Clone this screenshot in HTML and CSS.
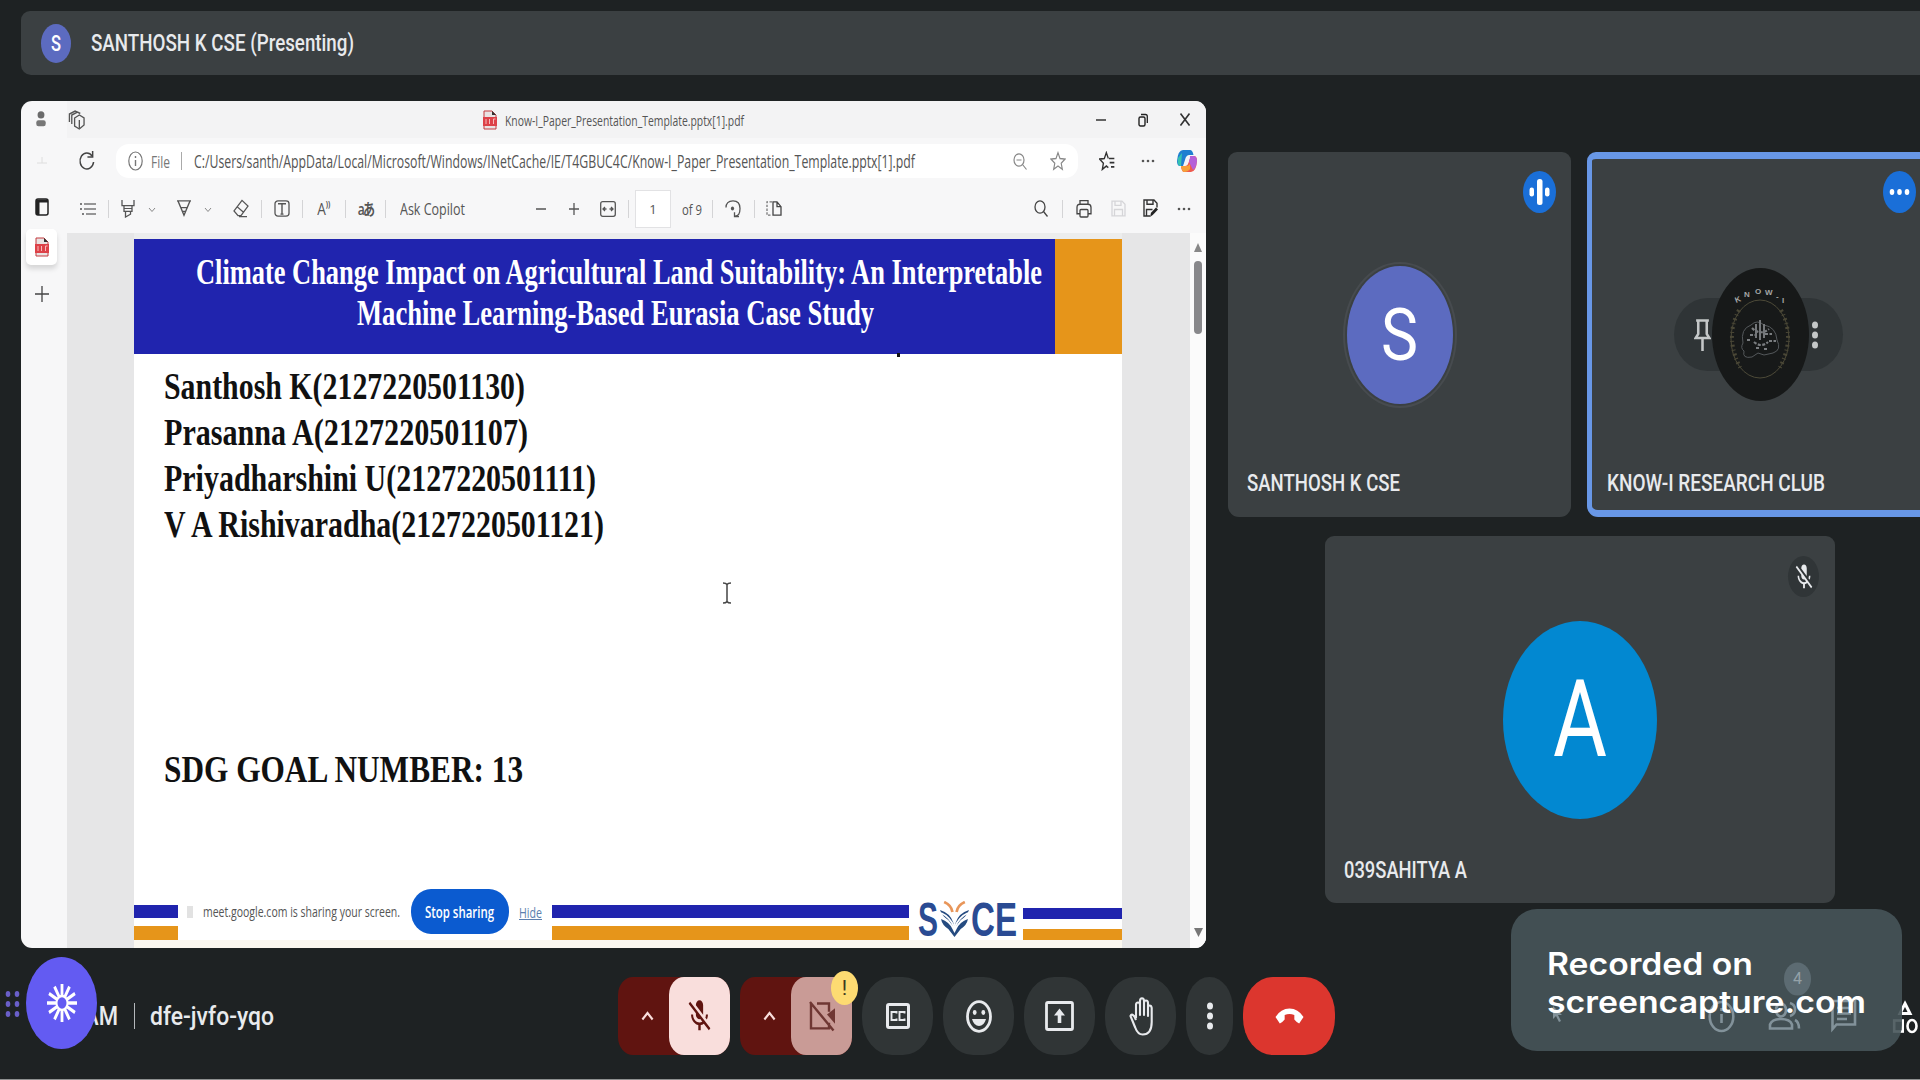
FILE: index.html
```html
<!DOCTYPE html>
<html lang="en">
<head>
<meta charset="utf-8">
<title>Meeting</title>
<link rel="stylesheet" href="styles.css">
</head>
<body>
<header class="presenter">
  <div class="avatar avatar-sm"><span class="fit ini-sm">S</span></div>
  <span class="fit presenter-name">SANTHOSH K CSE (Presenting)</span>
</header>

<main class="stage">
  <section class="window">
    <aside class="tabs">
      <svg class="i-person" viewBox="0 0 14 20" preserveAspectRatio="none"><circle cx="7" cy="5.500" r="4" fill="#6b6b6b"/><rect x="1.500" y="11.500" width="11" height="6.500" rx="2.500" fill="#777"/></svg>
      <svg class="i-back" viewBox="0 0 12 12"><path d="M1 9h10M6 3v6" stroke="#dedede" fill="none"/></svg>
      <svg class="i-tab" viewBox="0 0 14 18" preserveAspectRatio="none"><rect x="1" y="1" width="12" height="16" rx="2" fill="none" stroke="#222" stroke-width="1.500"/><path d="M1 2h3.500v15H1zM1 1.500h12v3H1z" fill="#222"/></svg>
      <div class="tab-current"><svg class="i-pdf" viewBox="0 0 14 20" preserveAspectRatio="none"><path d="M1 1h8l4 4v14H1z" fill="#e9e3e3" stroke="#c33a3f"/><path d="M9 1l4 4H9z" fill="#333"/><rect y="7" width="14" height="9" fill="#dd4148"/><path d="M3 9v5M6.500 9v5M10.500 9v5M10.500 9h2" stroke="#f7b9b9"/></svg></div>
      <svg class="i-plus" viewBox="0 0 14 16" preserveAspectRatio="none"><path d="M7 0v16M0 8h14" stroke="#444" stroke-width="1.300"/></svg>
    </aside>
    <div class="browser">
      <div class="titlebar">
        <svg class="i-copies" viewBox="0 0 18 20" preserveAspectRatio="none"><g fill="none" stroke="#555" stroke-width="1.400"><path d="M7 8l5-3 5 3v7l-5 4-5-3z"/><path d="M4 14V5l6-3 3 1.500M1.500 12V4l6-3 2 .8M12 10v8"/></g></svg>
        <svg class="i-pdf" viewBox="0 0 14 20" preserveAspectRatio="none"><path d="M1 1h8l4 4v14H1z" fill="#e9e3e3" stroke="#c33a3f"/><path d="M9 1l4 4H9z" fill="#333"/><rect y="7" width="14" height="9" fill="#dd4148"/><path d="M3 9v5M6.500 9v5M10.500 9v5M10.500 9h2" stroke="#f7b9b9"/></svg>
        <span class="fit doc-title">Know-I_Paper_Presentation_Template.pptx[1].pdf</span>
        <svg class="i-min" viewBox="0 0 10 12"><path d="M0 6h10" stroke="#333" stroke-width="1.600"/></svg>
        <svg class="i-restore" viewBox="0 0 10 14" preserveAspectRatio="none"><rect x="1" y="4" width="6" height="9" rx="1.500" fill="none" stroke="#222" stroke-width="1.400"/><path d="M3 1.500h4.500q1.800 0 1.800 2V10" fill="none" stroke="#222" stroke-width="1.300"/></svg>
        <svg class="i-close" viewBox="0 0 10 13" preserveAspectRatio="none"><path d="M.5.5l9 12M9.500.5l-9 12" stroke="#333" stroke-width="1.600"/></svg>
      </div>
      <div class="addressbar">
        <svg class="i-refresh" viewBox="0 0 18 20" preserveAspectRatio="none"><path d="M15 5A7.200 8 0 1 0 16.500 11" fill="none" stroke="#444" stroke-width="1.600"/><path d="M15.500 0v6H10" fill="none" stroke="#444" stroke-width="1.600"/></svg>
        <div class="url">
          <svg class="i-info-s" viewBox="0 0 15 20" preserveAspectRatio="none"><ellipse cx="7.500" cy="10" rx="6.700" ry="9" fill="none" stroke="#777" stroke-width="1.200"/><path d="M7.500 9v6M7.500 5v2" stroke="#777" stroke-width="1.400"/></svg>
          <span class="fit url-file">File</span>
          <i class="vline"></i>
          <span class="fit url-path">C:/Users/santh/AppData/Local/Microsoft/Windows/INetCache/IE/T4GBUC4C/Know-I_Paper_Presentation_Template.pptx[1].pdf</span>
          <svg class="i-zoomout" viewBox="0 0 14 17" preserveAspectRatio="none"><g fill="none" stroke="#888" stroke-width="1.200"><ellipse cx="6" cy="7" rx="5" ry="6.200"/><path d="M3.500 7h5M9.500 11.500l4 5"/></g></svg>
          <svg class="i-star" viewBox="0 0 24 24" preserveAspectRatio="none"><path d="M12 2l3 7 7.500.7-5.700 5 1.700 7.300L12 18l-6.500 4 1.700-7.300-5.700-5L9 9z" fill="none" stroke="#888" stroke-width="1.700"/></svg>
        </div>
        <svg class="i-star" viewBox="0 0 24 24" preserveAspectRatio="none"><path d="M14 20l-3-2-6 4 1.600-7.300L1 9.700 8 9l3-7 3 7M15 9h8M16 14h7M18 19h5" fill="none" stroke="#333" stroke-width="2"/></svg>
        <svg class="i-dots" viewBox="0 0 14 4"><g fill="#555"><circle cx="2" cy="2" r="1.300"/><circle cx="7" cy="2" r="1.300"/><circle cx="12" cy="2" r="1.300"/></g></svg>
        <svg class="i-copilot" viewBox="0 0 20 24" preserveAspectRatio="none"><path d="M6 1h7q2.500 0 3.500 5h-4Q9 6 8 11l-2 6H3Q0 17 0 12 1 1 6 1z" fill="#1f7fd0"/><path d="M1 9l4-5-1 13H3Q0 16 1 9z" fill="#36c3b0"/><path d="M14 23H7q-2 0-3-5l4-1q3 0 4-5l2-5h3q3 0 3 5-1 11-6 11z" fill="#ee5a4f"/><path d="M16 7q4 0 4 5-1 8-4 9l-4-8 1-6z" fill="#b45fd8"/><path d="M4 17h5q3 0 4-2v5q-2 3-6 3-2 0-3-6z" fill="#f6a03b"/><path d="M10 8h3l-3 8H7z" fill="#f4f4f6"/></svg>
      </div>
      <div class="toolbar">
        <svg class="i-list" viewBox="0 0 16 16" preserveAspectRatio="none"><path d="M4 3h12M4 8h12M6 13h10" stroke="#777" stroke-width="1.300"/><path d="M0 3h2M0 8h2M2 13h2" stroke="#555" stroke-width="1.600"/></svg>
        <i class="vline"></i>
        <div class="tool-pair">
          <svg class="i-tool" viewBox="0 0 16 20" preserveAspectRatio="none"><path d="M2 1v6h12V1M4 7v6h8V7M5.500 13v6l5-3v-3M4 10h8" fill="none" stroke="#555" stroke-width="1.300"/></svg>
          <svg class="i-chev" viewBox="0 0 8 6"><path d="M1 1l3 3.500L7 1" fill="none" stroke="#888"/></svg>
        </div>
        <div class="tool-pair">
          <svg class="i-tool" viewBox="0 0 16 20" preserveAspectRatio="none"><path d="M1 2h14M2 2l6 15 6-15M5 9h6M7 13h2" fill="none" stroke="#555" stroke-width="1.400"/></svg>
          <svg class="i-chev" viewBox="0 0 8 6"><path d="M1 1l3 3.500L7 1" fill="none" stroke="#888"/></svg>
        </div>
        <svg class="i-tool" viewBox="0 0 16 20" preserveAspectRatio="none"><path d="M9 1.500l6 6-7 10H5l-4-5zM4 8l6.500 6M6 18.500h8" fill="none" stroke="#555" stroke-width="1.300"/></svg>
        <i class="vline"></i>
        <svg class="i-tool" viewBox="0 0 16 20" preserveAspectRatio="none"><rect x="1" y="2" width="14" height="16" rx="3" fill="none" stroke="#555" stroke-width="1.300"/><path d="M4 5h8M8 5v11M6.500 16h3" stroke="#555" stroke-width="1.400"/></svg>
        <i class="vline"></i>
        <span class="read-aloud">A<sup>))</sup></span>
        <i class="vline"></i>
        <span class="translate">aあ</span>
        <i class="vline"></i>
        <span class="fit ask">Ask Copilot</span>
        <i></i>
        <svg class="i-sign" viewBox="0 0 10 12" preserveAspectRatio="none"><path d="M0 6h10" stroke="#555" stroke-width="1.300"/></svg>
        <svg class="i-sign" viewBox="0 0 10 12" preserveAspectRatio="none"><path d="M0 6h10M5 0v12" stroke="#555" stroke-width="1.300"/></svg>
        <svg class="i-fit" viewBox="0 0 16 16" preserveAspectRatio="none"><rect x=".7" y=".7" width="14.600" height="14.600" rx="2" fill="none" stroke="#555" stroke-width="1.300"/><path d="M3 8h3.500M13 8H9.500M5 6L3 8l2 2M11 6l2 2-2 2" fill="none" stroke="#555" stroke-width="1.300"/></svg>
        <i class="vline"></i>
        <span class="page-no">1</span>
        <span class="fit page-of">of 9</span>
        <i class="vline"></i>
        <svg class="i-tool" viewBox="0 0 16 20" preserveAspectRatio="none"><path d="M1 9Q1 2 8 2t7 8-5 8M9.500 14v4.500H14" fill="none" stroke="#555" stroke-width="1.300"/><ellipse cx="7.500" cy="10" rx="1.600" ry="2" fill="#555"/></svg>
        <i class="vline"></i>
        <svg class="i-tool" viewBox="0 0 16 20" preserveAspectRatio="none"><path d="M6 3H1v14h5" fill="none" stroke="#777" stroke-width="1.300" stroke-dasharray="2.500 1.500"/><path d="M7 3h4l4 5v9H7zM11 3v5h4" fill="none" stroke="#444" stroke-width="1.300"/></svg>
        <i></i>
        <svg class="i-search" viewBox="0 0 14 17" preserveAspectRatio="none"><g fill="none" stroke="#444" stroke-width="1.300"><ellipse cx="6" cy="7" rx="5" ry="6.200"/><path d="M9.500 11.500l4 5"/></g></svg>
        <i class="vline"></i>
        <svg class="i-tool" viewBox="0 0 16 18" preserveAspectRatio="none"><g fill="none" stroke="#444" stroke-width="1.300"><path d="M4 5V1.500h8V5M4 14H1V8q0-3 3-3h8q3 0 3 3v6h-3"/><rect x="4" y="10" width="8" height="7" rx="1"/></g></svg>
        <svg class="i-tool" viewBox="0 0 16 18" preserveAspectRatio="none"><path d="M2 2h10l3 3v11H2zM5 2v4h6V2M4.500 16v-6h8v6" fill="none" stroke="#d5d5d8" stroke-width="1.300"/></svg>
        <svg class="i-tool" viewBox="0 0 16 18" preserveAspectRatio="none"><path d="M8 16H2V1h10l3 3v4M5 1v4h6V1M4.500 16v-6h6" fill="none" stroke="#333" stroke-width="1.400"/><path d="M8 17l1-4 5-5 2 2-5 5z" fill="#222"/></svg>
        <svg class="i-dots" viewBox="0 0 14 4"><g fill="#555"><circle cx="2" cy="2" r="1.300"/><circle cx="7" cy="2" r="1.300"/><circle cx="12" cy="2" r="1.300"/></g></svg>
      </div>
      <div class="viewer">
        <article class="slide">
          <div class="banner">
            <h1 class="banner-title">
              <span class="fit bt-1">Climate Change Impact on Agricultural Land Suitability: An Interpretable</span>
              <span class="fit bt-2">Machine Learning-Based Eurasia Case Study</span>
            </h1>
            <div class="banner-accent"></div>
            <i class="speck"></i>
          </div>
          <div class="authors">
            <span class="fit au au-1">Santhosh K(2127220501130)</span>
            <span class="fit au au-2">Prasanna A(2127220501107)</span>
            <span class="fit au au-3">Priyadharshini U(2127220501111)</span>
            <span class="fit au au-4">V A Rishivaradha(2127220501121)</span>
          </div>
          <span class="fit au sdg">SDG GOAL NUMBER: 13</span>
          <div class="slide-foot">
            <div class="stripes stripes-l"></div>
            <div class="share">
              <i class="share-grip"></i>
              <span class="fit share-text">meet.google.com is sharing your screen.</span>
              <button class="share-stop"><span class="fit stop-text">Stop sharing</span></button>
              <a class="fit share-hide">Hide</a>
            </div>
            <div class="stripes stripes-m"></div>
            <div class="logo">
              <span class="fit logo-s">S</span>
              <svg class="logo-v" viewBox="0 0 28 36" preserveAspectRatio="none"><g fill="#254b80"><path d="M0 9q10 3 13 13l1 4 1-4q3-10 13-13-2 6-8 10l-6 8-6-8Q2 15 0 9z"/><path d="M1 18q8 3 11 10l2 4 2-4q3-7 11-10-1 6-7 10l-6 8-6-8Q2 24 1 18z"/></g><path d="M1 12q9 4 13 15 4-11 13-15" fill="none" stroke="#fff" stroke-width="1.800"/><path d="M4 1q7 3 8 10M24 1q-7 3-8 10" fill="none" stroke="#e8965a" stroke-width="2.600"/></svg>
              <span class="fit logo-ce">CE</span>
            </div>
            <div class="stripes stripes-r"></div>
          </div>
          <svg class="ibeam" viewBox="0 0 10 22"><path d="M1 1q3 0 4 1.500Q6 1 9 1M5 2.500v17M1 21q3 0 4-1.500Q6 21 9 21" fill="none" stroke="#444" stroke-width="1.500"/></svg>
        </article>
        <div class="scrollbar">
          <svg class="i-arrow" viewBox="0 0 8 9" preserveAspectRatio="none"><path d="M4 0l4 9H0z" fill="#888"/></svg>
          <div class="thumb"></div>
          <svg class="i-arrow down" viewBox="0 0 10 9" preserveAspectRatio="none"><path d="M0 0h10L5 9z" fill="#777"/></svg>
        </div>
      </div>
    </div>
  </section>

  <section class="people">
    <div class="people-row">
      <div class="tile tile-1">
        <div class="badge"><svg viewBox="0 0 32 42"><g fill="#fff"><rect x="6" y="16.500" width="4.500" height="9" rx="2.200"/><rect x="13.500" y="8" width="5.500" height="26" rx="2.500"/><rect x="21.500" y="16.500" width="4.500" height="9" rx="2.200"/></g></svg></div>
        <div class="avatar avatar-md"><span class="fit ini-md">S</span></div>
        <span class="fit name n-1">SANTHOSH K CSE</span>
      </div>
      <div class="tile tile-2">
        <div class="badge"><svg viewBox="0 0 32 42"><g fill="#fff"><ellipse cx="8.500" cy="21" rx="2.300" ry="2.900"/><ellipse cx="16" cy="21" rx="2.300" ry="2.900"/><ellipse cx="23.500" cy="21" rx="2.300" ry="2.900"/></g></svg></div>
        <div class="hover-pill">
          <svg class="i-pin" viewBox="0 0 16 32" preserveAspectRatio="none"><path d="M2 1.500h12M4 2v13l-2.500 4h13L12 15V2M8 19v13" fill="none" stroke="#c4c7c8" stroke-width="2.400"/></svg>
          <svg class="crest" viewBox="0 0 97 133">
            <ellipse cx="48.500" cy="66.500" rx="48.500" ry="66.500" fill="#171919"/>
            <ellipse cx="48" cy="71" rx="29" ry="39" fill="none" stroke="#4d4a38" stroke-width="1"/>
            <path d="M27 42q-15 28 2 59M69 42q15 28-2 59" fill="none" stroke="#4a4736" stroke-width="4" stroke-dasharray="2 3 1 3"/>
            <path d="M31 75q-3-14 8-18 6-6 13 0 12 2 13 15 5 10-4 13l-9 2-6-2-6 4q-10 2-8-6-4-3-1-8z" fill="none" stroke="#54585b"/>
            <path d="M40 60q8 8 17 1M38 67h6M53 66h7M42 74q7 6 14 0M35 72h4M57 73h7M44 80h4M52 81h4" fill="none" stroke="#7b7e81" stroke-width="2.200" stroke-dasharray="3 1.500"/>
            <path d="M48 52v20M44 56v14M52 56v14" fill="none" stroke="#74777a" stroke-width="2"/>
            <g fill="#a5a7a7" font-family="Liberation Sans" font-weight="bold" font-size="8"><text x="24" y="35" transform="rotate(-20 24 35)">K</text><text x="32" y="29">N</text><text x="43" y="26">O</text><text x="53" y="27">W</text><text x="64" y="31">-</text><text x="70" y="35">I</text></g>
          </svg>
          <svg class="i-kebab" viewBox="0 0 8 28"><g fill="#c4c7c8"><ellipse cx="4" cy="4" rx="3" ry="3.500"/><ellipse cx="4" cy="14" rx="3" ry="3.500"/><ellipse cx="4" cy="24" rx="3" ry="3.500"/></g></svg>
        </div>
        <span class="fit name n-2">KNOW-I RESEARCH CLUB</span>
      </div>
    </div>
    <div class="tile tile-3">
      <div class="badge muted"><svg class="i-mic" viewBox="0 0 24 24" preserveAspectRatio="none"><path fill="#e8eaed" d="M19 11h-1.700c0 .74-.16 1.430-.43 2.050l1.230 1.230c.56-.98.900-2.090.900-3.280zm-4.020.17c0-.06.02-.11.02-.17V5c0-1.660-1.340-3-3-3S9 3.340 9 5v.18l5.980 5.990zM4.270 3L3 4.270l6.010 6.010V11c0 1.660 1.330 3 2.990 3 .22 0 .44-.03.65-.08l1.660 1.660c-.71.33-1.500.52-2.310.52-2.760 0-5.300-2.100-5.300-5.100H5c0 3.410 2.720 6.230 6 6.720V21h2v-3.280c.91-.13 1.770-.45 2.540-.900L19.730 21 21 19.730 4.270 3z"/></svg></div>
      <div class="avatar avatar-lg"><span class="fit ini-lg">A</span></div>
      <span class="fit name n-3">039SAHITYA A</span>
    </div>
  </section>
</main>

<footer class="callbar">
  <div class="meeting-info">
    <span class="fit clock">AM</span>
    <i class="info-sep"></i>
    <span class="fit code">dfe-jvfo-yqo</span>
  </div>
  <div class="controls">
    <div class="split split-mic">
      <svg class="i-up" viewBox="0 0 14 10" preserveAspectRatio="none"><path d="M1.500 8.500L7 2l5.500 6.500" fill="none" stroke="#f9dedc" stroke-width="2.300"/></svg>
      <div class="split-btn"><svg class="i-ctl" viewBox="0 0 24 24" preserveAspectRatio="none"><path fill="#601410" d="M19 11h-1.700c0 .74-.16 1.430-.43 2.050l1.230 1.230c.56-.98.900-2.090.900-3.280zm-4.020.17c0-.06.02-.11.02-.17V5c0-1.660-1.340-3-3-3S9 3.340 9 5v.18l5.980 5.990zM4.270 3L3 4.270l6.010 6.010V11c0 1.660 1.330 3 2.990 3 .22 0 .44-.03.65-.08l1.660 1.660c-.71.33-1.500.52-2.310.52-2.760 0-5.300-2.100-5.300-5.100H5c0 3.410 2.720 6.230 6 6.720V21h2v-3.280c.91-.13 1.770-.45 2.540-.900L19.730 21 21 19.730 4.270 3z"/></svg></div>
    </div>
    <div class="split split-cam">
      <svg class="i-up" viewBox="0 0 14 10" preserveAspectRatio="none"><path d="M1.500 8.500L7 2l5.500 6.500" fill="none" stroke="#f9dedc" stroke-width="2.300"/></svg>
      <div class="split-btn"><svg class="i-cam" viewBox="0 0 26 30" preserveAspectRatio="none"><path d="M8 2.500h12v8M20 21v5.500H2v-24M1 1l23.500 27.500" fill="none" stroke="#6f3733" stroke-width="2.400"/><path d="M18 13l8-6v15z" fill="#6f3733"/></svg></div>
      <div class="warn">!</div>
    </div>
    <div class="round"><svg class="i-cc" viewBox="0 0 24 26" preserveAspectRatio="none"><rect x="1.500" y="1.500" width="21" height="23" rx="1.500" fill="none" stroke="#e8eaed" stroke-width="3"/><path d="M10.500 10.500V9H5.500v8h5v-1.500M18.500 10.500V9h-5v8h5v-1.500" fill="none" stroke="#e8eaed" stroke-width="1.900"/></svg></div>
    <div class="round"><svg class="i-smile" viewBox="0 0 26 33"><ellipse cx="13" cy="16.500" rx="11.500" ry="14.800" fill="none" stroke="#e8eaed" stroke-width="2.800"/><ellipse cx="8.700" cy="12.500" rx="1.900" ry="2.400" fill="#e8eaed"/><ellipse cx="17.300" cy="12.500" rx="1.900" ry="2.400" fill="#e8eaed"/><path d="M6 19h14q-2 7-7 7t-7-7z" fill="#e8eaed"/></svg></div>
    <div class="round"><svg class="i-present" viewBox="0 0 29 30"><rect x="1.500" y="1.500" width="26" height="27" rx="1.500" fill="none" stroke="#e8eaed" stroke-width="2.800"/><path d="M14.500 7.500l5.500 7h-3.700V22h-3.600v-7.500H9z" fill="#e8eaed"/></svg></div>
    <div class="round"><svg class="i-hand" viewBox="0 0 24 39"><path d="M7 21V8q0-2.500 2-2.500T11 8v10V4q0-2.800 2-2.800T15 4v14V6q0-2.500 2-2.500T19 6v13V11q0-2.500 1.700-2.500T22.700 11v14q0 12.500-9 12.500-5 0-7.500-7L1.500 19q1.200-3 4 .5L7 23" fill="none" stroke="#e8eaed" stroke-width="2.100" stroke-linejoin="round"/></svg></div>
    <div class="round slim"><svg class="i-kebab" viewBox="0 0 8 28"><g fill="#e8eaed"><ellipse cx="4" cy="4" rx="3" ry="3.600"/><ellipse cx="4" cy="14" rx="3" ry="3.600"/><ellipse cx="4" cy="24" rx="3" ry="3.600"/></g></svg></div>
    <div class="round end"><svg class="i-end" viewBox="0 0 30 16" preserveAspectRatio="none"><path d="M15 .5q9 0 14.500 8.500L25 15.500q-3-1.500-5-4V7q-5-1.800-10 0v4.500q-2 2.500-5 4L.5 9Q6 .5 15 .5z" fill="#fff"/></svg></div>
  </div>
</footer>

<svg class="grip" viewBox="0 0 16 28"><g fill="#6a5fc9"><ellipse cx="3" cy="4" rx="2.300" ry="3"/><ellipse cx="12" cy="4" rx="2.300" ry="3"/><ellipse cx="3" cy="14" rx="2.300" ry="3"/><ellipse cx="12" cy="14" rx="2.300" ry="3"/><ellipse cx="3" cy="24" rx="2.300" ry="3"/><ellipse cx="12" cy="24" rx="2.300" ry="3"/></g></svg>
<div class="recorder"><svg class="i-burst" viewBox="-15 -15 30 30" preserveAspectRatio="none"><g stroke="#fff" stroke-width="2.800"><path id="ray" d="M0-5V-15M0 5V15"/><use href="#ray" transform="rotate(30)"/><use href="#ray" transform="rotate(60)"/><use href="#ray" transform="rotate(90)"/><use href="#ray" transform="rotate(120)"/><use href="#ray" transform="rotate(150)"/></g><circle r="5.500" fill="none" stroke="#fff" stroke-width="2"/></svg></div>

<svg class="i-shapes" viewBox="0 0 26 34"><path d="M13 3.500L18 13.500H8z" fill="none" stroke="#fff" stroke-width="3"/><rect x="2.200" y="20.500" width="8.500" height="11" fill="none" stroke="#fff" stroke-width="2.600"/><ellipse cx="20" cy="26" rx="4.500" ry="6" fill="none" stroke="#fff" stroke-width="2.600"/></svg>
<div class="watermark">
  <svg class="ghosts" viewBox="0 0 391 142">
    <g fill="none" stroke="#82929a" stroke-width="2.600">
      <ellipse cx="210.500" cy="107.500" rx="11.800" ry="14.500"/><path d="M210.500 105v9M210.500 99v3"/>
      <ellipse cx="270" cy="101" rx="5" ry="6.500"/><path d="M259 119.500v-4q2-5.500 11-5.500t11 5.500v4zM279 94q5 1.500 5 6.500t-5 6.500M284 111q4 2 4 8.500"/>
      <path d="M321.500 120V92h22.500v23.500h-18.500zM326 99h14M326 104.500h14M326 110h10"/>
    </g>
    <ellipse cx="286.500" cy="70" rx="13.500" ry="16.500" fill="#5c6b72"/>
    <text x="286.500" y="75" text-anchor="middle" font-family="Roboto" font-size="16" fill="#94a2a8">4</text>
    <path d="M42 97v13l3-3 3 6 2-1-3-6h4z" fill="#82929a"/>
  </svg>
  <span class="fit wm wm-1">Recorded on</span>
  <span class="fit wm wm-2">screencapture.com</span>
</div>
</body>
</html>
```
FILE: styles.css
```css
* { box-sizing: border-box; }
body {
  margin: 0; width: 1920px; height: 1080px; overflow: hidden;
  display: flex; flex-direction: column; position: relative;
  background: #1e2223; color: #e8eaed;
  font-family: Roboto, "Liberation Sans", sans-serif;
  box-shadow: inset 0 -1px #8e9090;
}
svg { display: block; flex: none; }

/* Condensed labels: --w is the set width, --k the horizontal scale. */
.fit {
  display: block; flex: none; white-space: nowrap;
  width: var(--w); transform: scaleX(var(--k)); transform-origin: 0 50%;
}

/* Presenter bar */
.presenter {
  display: flex; align-items: center; gap: 20px; flex: none;
  height: 64px; margin: 11px 0 0 21px; padding-left: 20px;
  background: #3b4042; border-radius: 9px 0 0 10px;
}
.avatar { display: flex; align-items: center; justify-content: center; border-radius: 50%; background: #5c6bc0; color: #fff; flex: none; }
.avatar-sm { width: 30px; height: 39px; }
.ini-sm { --w: 10px; --k: .7503; font-size: 22px; font-weight: 500; }
.presenter-name { --w: 263px; --k: .7816; font-size: 24px; font-weight: 500; }

/* Shared browser window */
.stage { display: flex; height: 847px; margin: 26px 0 0 21px; flex: none; }
.window { width: 1185px; display: flex; background: #f7f7f8; border-radius: 11px; overflow: hidden; flex: none; color: #555; font-family: "Open Sans", sans-serif; }
.tabs { width: 46px; display: flex; flex-direction: column; align-items: center; padding-right: 5px; }
.i-person { width: 12px; height: 18px; margin: 9px 2px 0 0; }
.i-back { width: 12px; height: 12px; margin-top: 26px; }
.i-tab { width: 14px; height: 18px; margin-top: 32px; }
.tab-current { width: 31px; height: 36px; margin-top: 13px; border-radius: 5px; background: #fff; box-shadow: 0 4px 5px #0002; display: flex; align-items: center; justify-content: center; }
.i-pdf { width: 14px; height: 20px; }
.i-plus { width: 14px; height: 16px; margin-top: 21px; }
.browser { flex: 1; display: flex; flex-direction: column; min-width: 0; }

.titlebar { height: 37px; display: grid; align-items: center; justify-items: center; grid-template-columns: 19px 397px 14px 8px 239px 1fr 42px 42px 42px; padding-right: 0; background: #f3f3f4; flex: none; }
.i-copies { width: 17px; height: 20px; }
.titlebar .i-pdf { grid-column: 3; }
.doc-title { --w: 239px; --k: .6925; grid-column: 5; font-size: 15px; }
.i-min { width: 10px; height: 12px; grid-column: 7; }
.i-restore { width: 10px; height: 14px; }
.i-close { width: 10px; height: 13px; }

.addressbar { height: 46px; display: grid; align-items: center; justify-items: center; grid-template-columns: 49px 962px 58px 23px 9px 38px; flex: none; }
.i-refresh { width: 17px; height: 20px; margin-right: 10px; }
.url { width: 962px; height: 34px; border-radius: 13px; background: #fff; display: flex; align-items: center; padding-left: 12px; }
.i-info-s { width: 15px; height: 20px; }
.url-file { --w: 19px; --k: .7062; margin-left: 8px; font-size: 17px; color: #777; }
.vline { width: 1px; height: 18px; background: #d4d4d6; }
.url .vline { margin: 0 12px 0 11px; background: #aaa; }
.url-path { --w: 721px; --k: .7026; font-size: 17.500px; }
.i-zoomout { width: 14px; height: 17px; margin-left: 98px; }
.i-star { width: 16px; height: 20px; }
.url .i-star { margin-left: 23px; }
.i-dots { width: 14px; height: 4px; }
.i-copilot { width: 20px; height: 24px; grid-column: 6; }

.toolbar { height: 49px; display: grid; align-items: center; justify-items: center; flex: none;
  grid-template-columns: 41px 1px 58px 53px 41px 1px 40px 1px 42px 1px 39px 1px 95px 43px 33px 34px 37px 1px 48px 29px 12px 30px 12px 28px 1fr 34px 8px 36px 31px 34px 34px 5px; }
.tool-pair { display: flex; align-items: center; gap: 12px; }
.i-list { width: 16px; height: 16px; }
.i-tool { width: 16px; height: 19px; }
.i-chev { width: 8px; height: 6px; margin-top: 3px; }
.read-aloud { font-size: 16px; line-height: 20px; transform: scaleX(.85); white-space: nowrap; }
.read-aloud sup { font-size: 8px; line-height: 0; vertical-align: 8px; font-weight: bold; }
.translate { font: 600 16px/20px "Open Sans", "Noto Sans CJK JP", sans-serif; transform: scaleX(.75); letter-spacing: -2px; white-space: nowrap; }
.ask { --w: 65px; --k: .7352; font-size: 17px; margin-right: 2px; }
.i-sign { width: 10px; height: 12px; }
.i-fit { width: 16px; height: 16px; margin-right: 3px; }
.page-no { width: 36px; height: 38px; border: 1px solid #e2e2e4; background: #fff; text-align: center; font-size: 13px; line-height: 36px; }
.page-of { --w: 20px; --k: .7534; font-size: 15px; }
.i-search { width: 14px; height: 17px; }

/* Slide */
.viewer { flex: 1; display: flex; justify-content: space-between; padding-left: 67px; background: #e6e6e7; min-height: 0; }
.slide { width: 988px; border-top: 6px solid #eceded; display: flex; flex-direction: column; position: relative; background: #fff; font-family: "Liberation Serif", serif; font-weight: bold; }
.banner { height: 115px; display: flex; position: relative; flex: none; }
.banner-title { margin: 0; flex: 1; padding: 13px 13px 0 62px; background: #2024ae; color: #fff; font-size: 35px; line-height: 41px; display: flex; flex-direction: column; }
.bt-1 { --w: 846px; --k: .7545; }
.bt-2 { --w: 517px; --k: .7596; margin-left: 161px; }
.banner-accent { width: 67px; background: #e6951a; }
.speck { position: absolute; left: 763px; top: 114px; width: 3px; height: 4px; background: #111; }
.authors { padding: 9px 0 0 30px; }
.au { font-size: 38.500px; line-height: 46px; color: #111; }
.au-1 { --w: 361px; --k: .7758; } .au-2 { --w: 364px; --k: .7824; } .au-3 { --w: 432px; --k: .7782; } .au-4 { --w: 440px; --k: .7771; }
.sdg { --w: 359px; --k: .8128; margin: 199px 0 0 30px; }
.slide-foot { margin-top: auto; height: 68px; display: flex; flex: none; border-bottom: 8px solid #fbf8f0; }
.stripes { margin-top: 25px; height: 35px; background: linear-gradient(#2024ae 13px, #fff 13px 21px, #e6951a 21px); }
.stripes-l { width: 44px; } .stripes-m { width: 357px; }
.stripes-r { width: 99px; margin-top: 28px; height: 32px; background: linear-gradient(#2024ae 11px, #fff 11px 21px, #e6951a 21px); }
.share { width: 374px; display: flex; align-items: center; padding: 3px 0 0 9px; font-family: "Open Sans", sans-serif; font-weight: normal; color: #555; }
.share-grip { width: 6px; height: 12px; background: #e2e2e2; margin-right: 10px; }
.share-text { --w: 197px; --k: .7501; font-size: 14px; }
.share-stop { width: 98px; height: 45px; margin: 0 10px 0 11px; padding: 0 14px; border: 0; border-radius: 20px/22px; background: #0b5bd0; color: #fff; font: 600 15.500px "Open Sans", sans-serif; text-align: left; }
.stop-text { --w: 69px; --k: .7370; }
.share-hide { --w: 23px; --k: .7087; font-size: 15px; color: #5b7fae; text-decoration: underline; }
.logo { width: 114px; display: flex; align-items: center; padding: 18px 0 0 9px; font: 900 49px/42px "Liberation Sans", sans-serif; color: #2a4b93; }
.logo-s { --w: 20px; --k: .6120; }
.logo-v { width: 29px; height: 36px; margin: 0 2px; }
.logo-ce { --w: 46px; --k: .6757; }
.ibeam { position: absolute; left: 588px; top: 343px; width: 10px; height: 22px; }
.scrollbar { width: 16px; background: #fbfbfb; display: flex; flex-direction: column; align-items: center; padding: 10px 0 11px; }
.i-arrow { width: 8px; height: 9px; }
.thumb { width: 8px; height: 73px; margin-top: 9px; border-radius: 4px; background: #88888b; }
.down { width: 9px; margin-top: auto; }

/* Participants */
.people { margin-left: 22px; padding-top: 51px; flex: 1; }
.people-row { display: flex; gap: 16px; }
.tile { position: relative; height: 365px; background: #3b4042; border-radius: 9px 9px 11px 11px; display: flex; align-items: center; justify-content: center; flex: none; }
.tile-1 { width: 343px; }
.tile-2 { width: 344px; border: solid #6897e6; border-width: 7px 5px; }
.tile-3 { width: 510px; height: 367px; margin: 19px 0 0 97px; padding-right: 1px; }
.badge { position: absolute; right: 15px; top: 19px; width: 33px; height: 42px; border-radius: 50%; background: #1a6fd8; }
.badge svg { width: 33px; height: 42px; }
.tile-2 .badge { right: 10px; top: 12px; }
.muted { width: 31px; height: 41px; right: 16px; top: 20px; background: #303537; display: flex; align-items: center; justify-content: center; }
.badge .i-mic { width: 22px; height: 30px; }
.avatar-md { width: 106px; height: 138px; box-shadow: 0 0 0 2px #3b4042, 0 0 0 4px #474b4f; }
.ini-md { --w: 37px; --k: .8536; font-size: 73px; }
.avatar-lg { width: 154px; height: 198px; background: #0288d1; }
.ini-lg { --w: 54px; --k: .7735; font-size: 107px; }
.name { position: absolute; left: 19px; bottom: 20px; font-size: 24px; line-height: 28px; font-weight: 500; }
.n-1 { --w: 153px; --k: .7738; } .n-2 { --w: 218px; --k: .7913; left: 15px; bottom: 13px; } .n-3 { --w: 123px; --k: .7650; bottom: 19px; }
.hover-pill { width: 169px; height: 73px; border-radius: 34px/37px; background: #2f3436; display: flex; align-items: center; justify-content: space-between; padding: 0 24px 0 20px; margin-left: -2px; }
.i-pin { width: 17px; height: 32px; }
.crest { width: 97px; height: 133px; margin-right: 1px; }
.i-kebab { width: 8px; height: 28px; }

/* Call controls */
.callbar { display: flex; height: 132px; flex: none; padding-top: 29px; }
.meeting-info { width: 618px; height: 78px; display: flex; align-items: center; padding-left: 84px; font-size: 25px; font-weight: 500; }
.clock { --w: 34px; --k: .8842; }
.info-sep { width: 1px; height: 26px; margin: 0 15px 0 16px; background: #b4b8bb; }
.code { --w: 124px; --k: .9166; }
.controls { display: flex; gap: 10px; }
.split { position: relative; width: 112px; height: 78px; display: flex; align-items: center; justify-content: space-between; padding-left: 23px; border-radius: 15px/18px; background: #601410; }
.i-up { width: 13px; height: 10px; }
.split-btn { width: 61px; height: 78px; border-radius: 15px/18px; background: #f9dedc; display: flex; align-items: center; justify-content: center; }
.split-cam .split-btn { background: #c99b96; }
.i-ctl { width: 29px; height: 38px; }
.i-cam { width: 26px; height: 31px; }
.warn { position: absolute; right: -6px; top: -6px; width: 27px; height: 34px; border-radius: 50%; background: #fddb72; color: #3c3a20; font-size: 21px; line-height: 34px; text-align: center; }
.round { width: 71px; height: 78px; border-radius: 30px/37px; background: #303536; display: flex; align-items: center; justify-content: center; }
.i-cc { width: 24px; height: 26px; }
.i-smile { width: 26px; height: 33px; }
.i-present { width: 29px; height: 30px; }
.i-hand { width: 24px; height: 39px; }
.i-end { width: 29px; height: 16px; }
.slim { width: 47px; border-radius: 23px/32px; }
.end { width: 92px; background: #dc362e; }

/* Overlays */
.grip { position: absolute; left: 5px; top: 990px; width: 16px; height: 28px; }
.recorder { position: absolute; left: 26px; top: 957px; width: 71px; height: 92px; border-radius: 50%; background: #635bf2; display: flex; align-items: center; justify-content: center; }
.i-burst { width: 30px; height: 38px; }
.i-shapes { position: absolute; left: 1892px; top: 1000px; width: 26px; height: 34px; }
.watermark { position: absolute; left: 1511px; top: 909px; width: 391px; height: 142px; border-radius: 26px; background: #465459e6; padding: 36px 0 0 36px; color: #fff; }
.ghosts { position: absolute; left: 0; top: 0; width: 391px; height: 142px; }
.wm { position: relative; font: 600 31px/38px Inter, sans-serif; }
.wm-1 { --w: 206px; --k: 1.0877; }
.wm-2 { --w: 319px; --k: 1.0907; }
```
